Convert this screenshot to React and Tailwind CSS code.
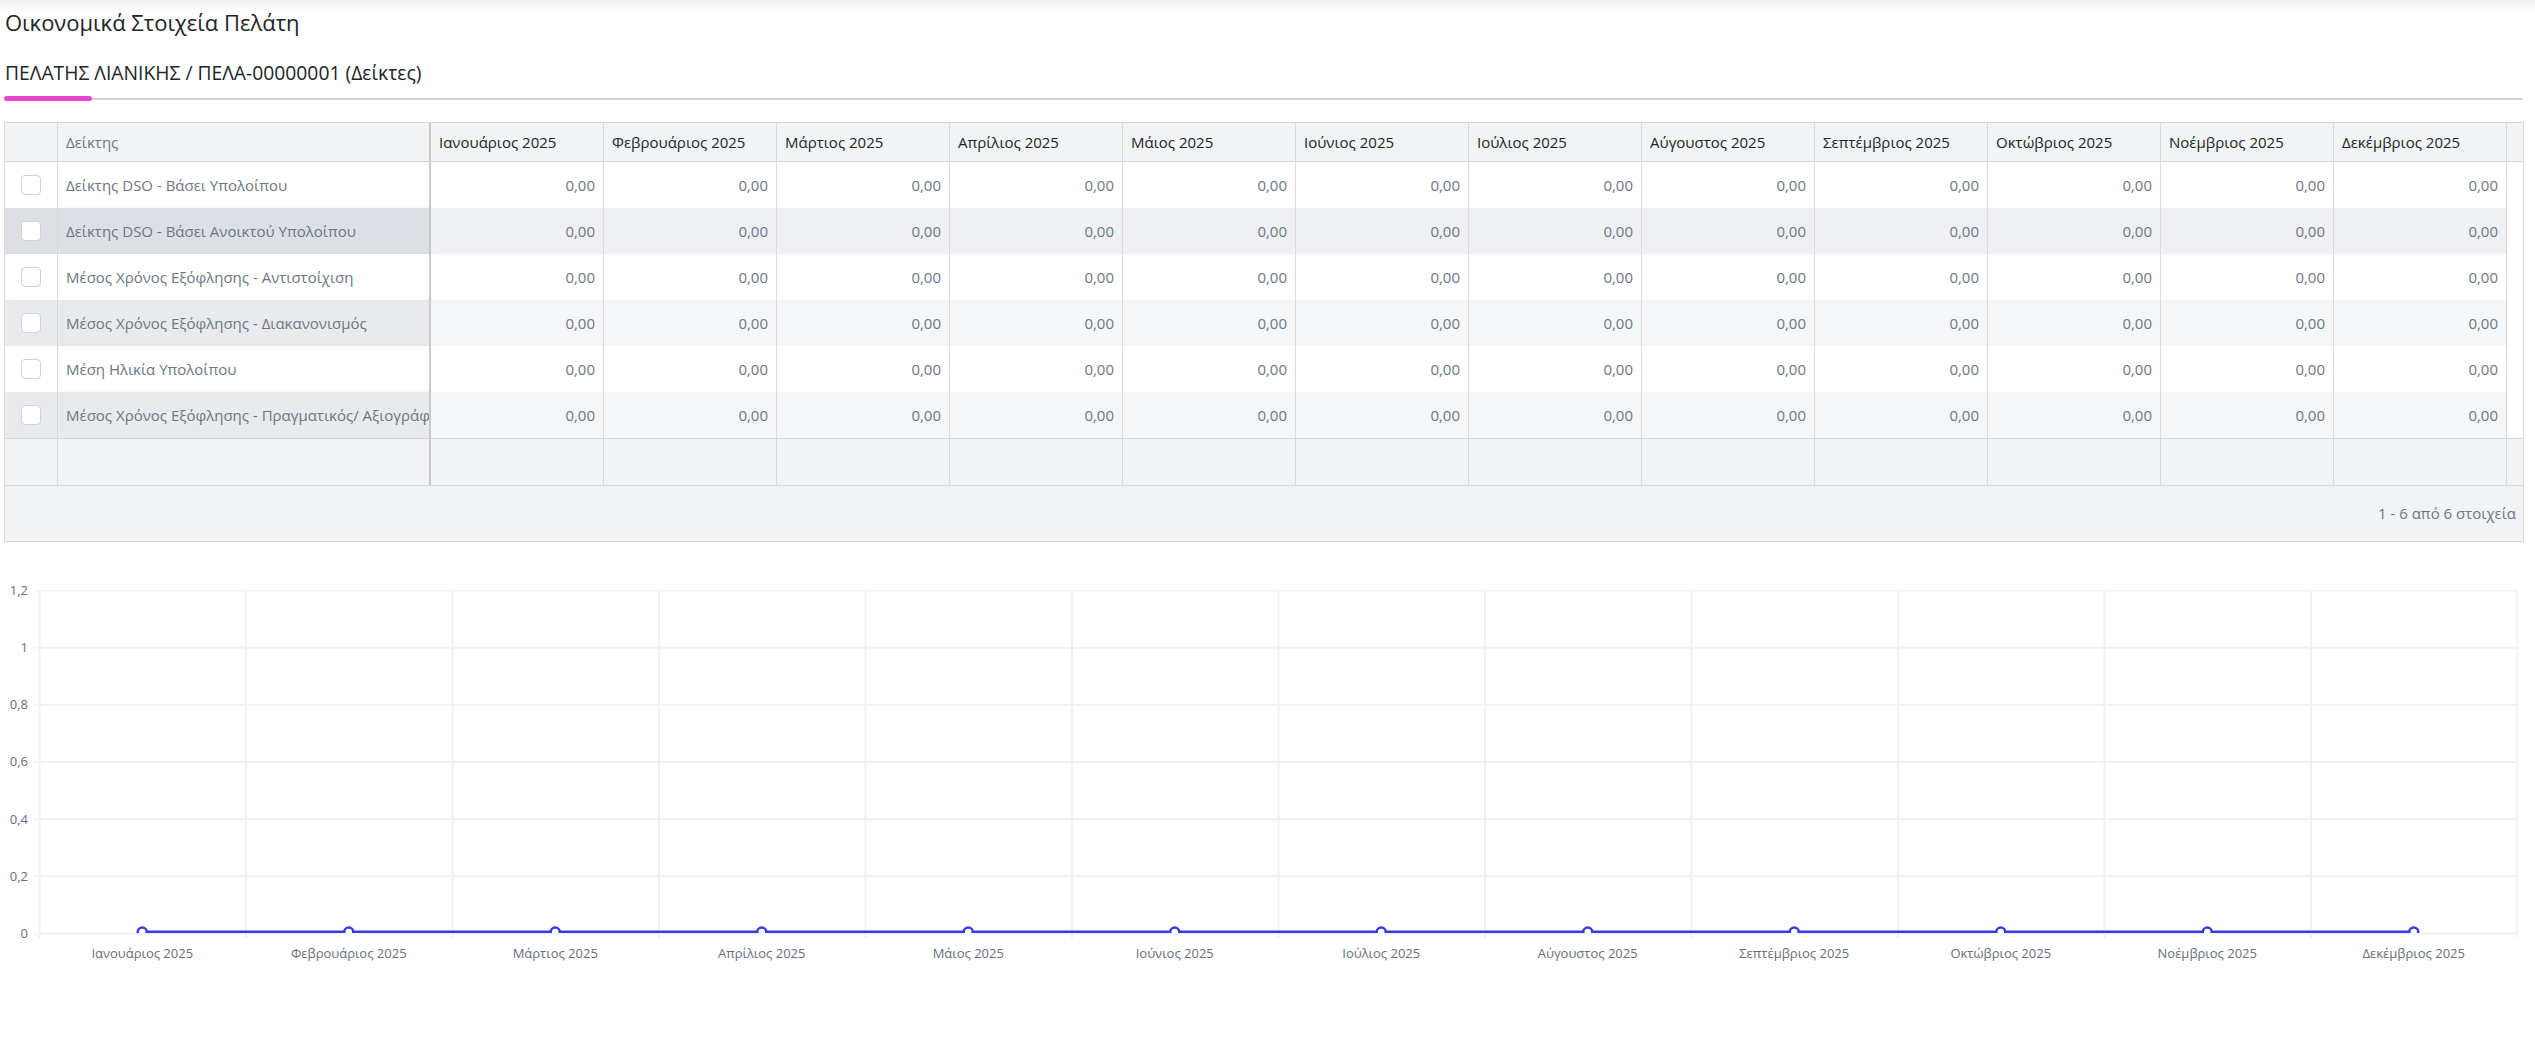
import React from "react";

const MONTHS = [
  "Ιανουάριος 2025",
  "Φεβρουάριος 2025",
  "Μάρτιος 2025",
  "Απρίλιος 2025",
  "Μάιος 2025",
  "Ιούνιος 2025",
  "Ιούλιος 2025",
  "Αύγουστος 2025",
  "Σεπτέμβριος 2025",
  "Οκτώβριος 2025",
  "Νοέμβριος 2025",
  "Δεκέμβριος 2025",
];

const ROWS = [
  { name: "Δείκτης DSO - Βάσει Υπολοίπου", locked: "bg-white", scroll: "bg-white" },
  { name: "Δείκτης DSO - Βάσει Ανοικτού Υπολοίπου", locked: "bg-[#dcdfe4]", scroll: "bg-[#eff0f3]" },
  { name: "Μέσος Χρόνος Εξόφλησης - Αντιστοίχιση", locked: "bg-white", scroll: "bg-white" },
  { name: "Μέσος Χρόνος Εξόφλησης - Διακανονισμός", locked: "bg-[#e8eaed]", scroll: "bg-[#f5f6f7]" },
  { name: "Μέση Ηλικία Υπολοίπου", locked: "bg-white", scroll: "bg-white" },
  { name: "Μέσος Χρόνος Εξόφλησης - Πραγματικός/ Αξιογράφων", locked: "bg-[#e8eaed]", scroll: "bg-[#f5f6f7]" },
];

const GRID = "grid grid-cols-[53px_373px_repeat(12,173px)_1fr]";
const Y_LABELS = ["1,2", "1", "0,8", "0,6", "0,4", "0,2", "0"];

const Checkbox = () => (
  <span className="block w-[20px] h-[20px] rounded-[4px] border border-[#cfd2d6] bg-white" />
);

const Chart = () => {
  const step = 206.5;
  const gridY = [0, 1, 2, 3, 4, 5, 6].map((i) => 0.5 + i * 57.17);
  const gridX = Array.from({ length: 13 }, (_, i) => 4.5 + i * step);
  const points = MONTHS.map((_, i) => 4 + step / 2 + i * step);

  return (
    <div className="mt-[40px]">
      <div className="flex">
        <div className="w-[29px] h-[359px] flex flex-col justify-between items-end pr-[1px] text-[13px] leading-[16px] text-[#666e7e]">
          {Y_LABELS.map((l) => (
            <span key={l}>{l}</span>
          ))}
        </div>
        <svg className="ml-[6px] mt-[8px]" width="2483" height="349" viewBox="0 0 2483 349">
          <defs>
            <clipPath id="plot">
              <rect x="4" y="0" width="2478" height="343" />
            </clipPath>
          </defs>
          {gridY.map((y) => (
            <line key={y} x1="0" x2="2483" y1={y} y2={y} stroke="#f1f1f3" strokeWidth="2" />
          ))}
          {gridX.map((x) => (
            <line key={x} x1={x} x2={x} y1="0" y2="348" stroke="#f1f1f3" strokeWidth="2" />
          ))}
          <g clipPath="url(#plot)">
            <polyline
              points={points.map((x) => `${x},342`).join(" ")}
              fill="none"
              stroke="#3a3ae4"
              strokeWidth="3"
            />
            {points.map((x) => (
              <circle key={x} cx={x} cy="342" r="4.5" fill="#fff" stroke="#3a3ae4" strokeWidth="2.5" />
            ))}
          </g>
        </svg>
      </div>
      <div className="ml-[39px] mt-[4px] w-[2478px] grid grid-cols-12 text-[13px] leading-[16px] text-[#666e7e]">
        {MONTHS.map((m) => (
          <span key={m} className="text-center">
            {m}
          </span>
        ))}
      </div>
    </div>
  );
};

export default function App() {
  return (
    <div className="min-h-screen bg-[linear-gradient(to_bottom,#efefef,#ffffff_12px)] font-['Open_Sans','Noto_Sans',sans-serif] pb-[40px]">
      <div className="pt-[7px] px-[5px]">
        <h1 className="text-[22px] leading-[30px] text-[#212529]">Οικονομικά Στοιχεία Πελάτη</h1>
      </div>
      <div className="mt-[24px] px-[5px]">
        <h2 className="text-[19.3px] leading-[24px] text-[#212529]">
          ΠΕΛΑΤΗΣ ΛΙΑΝΙΚΗΣ / ΠΕΛΑ-00000001 (Δείκτες)
        </h2>
      </div>
      <div className="mt-[11px] ml-[4px] w-[2518px] flex items-center">
        <span className="w-[88px] h-[5px] rounded-full bg-[#e444d0]" />
        <span className="flex-1 h-[2px] bg-[#d2d2d2]" />
      </div>

      {/* grid */}
      <div className="mt-[21px] ml-[4px] w-[2520px] border border-[#d6d8da] text-[15px]">
        <div className={`${GRID} h-[39px] bg-[#f1f3f4] border-b border-[#d6d8da]`}>
          <div className="border-r border-[#d6d8da]" />
          <div className="border-r-2 border-[#cacaca] pl-[8px] flex items-center text-[#6b7785]">Δείκτης</div>
          {MONTHS.map((m) => (
            <div key={m} className="border-r border-[#d6d8da] pl-[8px] flex items-center text-[#212529] whitespace-nowrap">
              {m}
            </div>
          ))}
          <div />
        </div>

        {ROWS.map((r) => (
          <div key={r.name} className={`${GRID} h-[46px] text-[#6b7785]`}>
            <div className={`${r.locked} border-r border-[#d6d8da] flex items-center justify-center`}>
              <Checkbox />
            </div>
            <div className={`${r.locked} border-r-2 border-[#cacaca] shadow-[2px_0_3px_rgba(0,0,0,0.06)] pl-[8px] flex items-center whitespace-nowrap overflow-hidden`}>
              {r.name}
            </div>
            {MONTHS.map((m) => (
              <div key={m} className={`${r.scroll} border-r border-[#dcdcdc] pr-[8px] flex items-center justify-end`}>
                0,00
              </div>
            ))}
            <div className="bg-white" />
          </div>
        ))}

        <div className={`${GRID} h-[47px] bg-[#f1f3f4] border-t border-[#d6d8da]`}>
          <div className="border-r border-[#d6d8da]" />
          <div className="border-r-2 border-[#cacaca]" />
          {MONTHS.map((m) => (
            <div key={m} className="border-r border-[#d6d8da]" />
          ))}
          <div />
        </div>

        <div className="h-[56px] bg-[#f1f3f4] border-t border-[#d6d8da] flex items-center justify-end pr-[7px] text-[#6b7785]">
          1 - 6 από 6 στοιχεία
        </div>
      </div>

      <Chart />
    </div>
  );
}
